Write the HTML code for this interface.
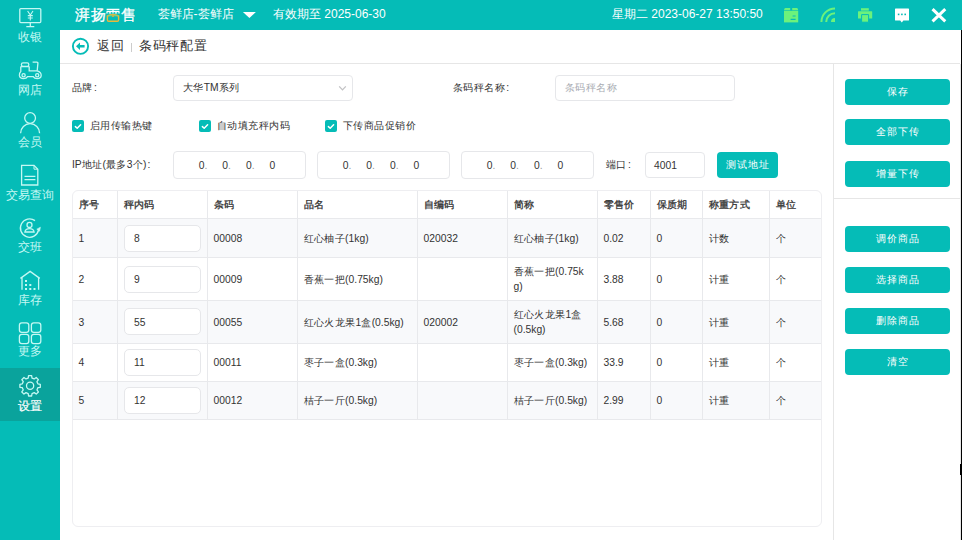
<!DOCTYPE html>
<html><head><meta charset="utf-8">
<style>
*{box-sizing:border-box;margin:0;padding:0}
html,body{width:962px;height:540px;overflow:hidden;background:#fff;font-family:"Liberation Sans",sans-serif;color:#333}
.a{position:absolute}
.sl{position:absolute;left:0;width:60px;text-align:center;color:#c4f8f3;font-size:12px;line-height:13px;white-space:nowrap}
.ht{position:absolute;color:#fff;font-size:12px;line-height:14px;white-space:nowrap}
.lbl{position:absolute;font-size:10.3px;line-height:12px;color:#333;white-space:nowrap}
.box{position:absolute;border:1px solid #e6e7ea;border-radius:4px;background:#fff}
.cb{position:absolute;width:12px;height:12px;background:#05bcb7;border-radius:2px}
.btn{position:absolute;background:#05bcb7;border-radius:4px;color:#fff;font-size:10.1px;letter-spacing:0.7px;padding-left:0.7px;text-align:center;white-space:nowrap}
.hl{position:absolute;background:#e8e9ec}
.cell{position:absolute;font-size:10.3px;line-height:15px;color:#333;white-space:nowrap}
.c{}
.th{-webkit-text-stroke:0.3px #333}
.th .c{-webkit-text-stroke:0.3px #333}
</style></head><body>
<div class="a" style="left:0;top:0;width:60px;height:540px;background:#05bcb7"></div>
<div class="a" style="left:0;top:368px;width:60px;height:53px;background:#0aa39c"></div>
<div class="a" style="left:60px;top:0;width:902px;height:30px;background:#05bcb7"></div>
<div class="sl" style="top:30.5px">收银</div>
<div class="sl" style="top:83.6px">网店</div>
<div class="sl" style="top:136px">会员</div>
<div class="sl" style="top:189px">交易查询</div>
<div class="sl" style="top:241px">交班</div>
<div class="sl" style="top:294px">库存</div>
<div class="sl" style="top:345px">更多</div>
<div class="sl" style="top:399.6px;color:#fff;-webkit-text-stroke:0.2px #fff">设置</div>
<svg class="a" style="left:0;top:0" width="60" height="421" viewBox="0 0 60 421" fill="none" stroke="#c4f8f3" stroke-width="1.3">
 <rect x="19.8" y="8.6" width="21" height="14" rx="1"/>
 <path d="M30.3 23 V26.6 M26.3 26.6 H34.3"/>
 <path d="M27.6 11 L30.3 15 L33 11 M27.8 15.6 H32.8 M27.8 18 H32.8 M30.3 15 V20.5" stroke-width="1.1"/>
 <rect x="21.4" y="62.8" width="7.4" height="3.6" rx="1.6"/>
 <path d="M20.8 66.6 H29.2"/>
 <path d="M32.6 62.2 H36.8 Q38 62.2 37.9 63.4 L37.2 70.8"/>
 <path d="M20.8 66.6 V71.4 Q19.2 72.8 19.4 75.4 Q19.8 78.6 23.6 78.6 Q26.4 78.6 27.6 76.6 H33.2 Q34.4 78.6 37.2 78.6 Q41 78.6 41.2 75.4 Q41.3 72 37.2 70.8 H29.2 V66.6"/>
 <circle cx="23.6" cy="75.2" r="1.6"/>
 <circle cx="37.2" cy="75.2" r="1.6"/>
 <circle cx="30.1" cy="118" r="5.4"/>
 <path d="M20.6 133.2 A9.5 9.5 0 0 1 39.6 133.2"/>
 <path d="M21.6 165.4 H34 L37.8 169.2 V185 H21.6 Z"/>
 <path d="M34 165.4 V169.2 H37.8" stroke-width="1"/>
 <path d="M24.5 176.4 H35.4 M24.5 179.7 H35.4"/>
 <path d="M35 220.6 A9.2 9.2 0 1 0 38.6 230"/>
 <path d="M36.8 229.2 L40.4 227.2 L39.6 231.2 Z" fill="#c4f8f3" stroke-width="0.6"/>
 <circle cx="29.5" cy="224.9" r="2.5"/>
 <path d="M24.9 232 Q25.4 228.6 29.5 228.6 Q33.6 228.6 34.1 232 Z"/>
 <path d="M20.4 278.4 L30.1 271.4 L39.8 278.4 M22 277.2 V289.8 M38.6 277.2 V289.8"/>
 <rect x="19.4" y="322.9" width="9.4" height="9.4" rx="2.4"/>
 <rect x="31.4" y="322.9" width="9.4" height="9.4" rx="2.4"/>
 <rect x="19.4" y="334.3" width="9.4" height="9.4" rx="2.4"/>
 <rect x="31.4" y="334.3" width="9.4" height="9.4" rx="2.4"/>
 <circle cx="30.1" cy="385.8" r="3.6"/>
 <path d="M37.86 383.87 L40.29 384.27 L40.29 387.33 L37.86 387.73 L36.95 389.93 L38.39 391.92 L36.22 394.09 L34.23 392.65 L32.03 393.56 L31.63 395.99 L28.57 395.99 L28.17 393.56 L25.97 392.65 L23.98 394.09 L21.81 391.92 L23.25 389.93 L22.34 387.73 L19.91 387.33 L19.91 384.27 L22.34 383.87 L23.25 381.67 L21.81 379.68 L23.98 377.51 L25.97 378.95 L28.17 378.04 L28.57 375.61 L31.63 375.61 L32.03 378.04 L34.23 378.95 L36.22 377.51 L38.39 379.68 L36.95 381.67 Z" stroke-linejoin="round"/>
</svg>
<svg class="a" style="left:0;top:0" width="60" height="421" viewBox="0 0 60 421" fill="#c4f8f3">
 <rect x="25" y="280" width="2" height="2"/>
 <rect x="25" y="284" width="2" height="2"/><rect x="29.3" y="284" width="2" height="2"/>
 <rect x="25" y="288" width="2" height="2"/><rect x="29.3" y="288" width="2" height="2"/><rect x="33.5" y="288" width="2" height="2"/>
</svg>
<div class="ht" style="left:75px;top:7px;font-size:14.6px;line-height:16px;letter-spacing:0.9px;-webkit-text-stroke:0.3px #fff">湃扬</div>
<div class="ht" style="left:121px;top:7px;font-size:14.6px;line-height:16px;-webkit-text-stroke:0.3px #fff">售</div>
<svg class="a" style="left:104px;top:6px" width="18" height="18" viewBox="104 6 18 18">
 <path d="M106.6 9.3 H119.4 M106.6 11.4 H119.4 M107 11.4 V13.6 M119 11.4 V13.6 M113 9.3 V13.6 M108.8 12.8 H111.2 M114.8 12.8 H117.2" stroke="#fff" stroke-width="1.3" fill="none"/>
 <path d="M107.4 16 Q113 13.6 118.6 16 V20 Q118.6 21.2 117.4 21.2 H108.6 Q107.4 21.2 107.4 20 Z" stroke="#e9b93a" stroke-width="1.4" fill="none"/>
 <path d="M107.6 15.8 H118.4" stroke="#7fd37c" stroke-width="0.9"/>
 <circle cx="113" cy="16.2" r="0.9" fill="#f0a830"/>
</svg>
<div class="ht" style="left:157.5px;top:7px;font-size:12.4px">荟鲜店-荟鲜店</div>
<div class="ht" style="left:273px;top:7px">有效期至 2025-06-30</div>
<div class="ht" style="left:612px;top:7px">星期二 2023-06-27 13:50:50</div>
<svg class="a" style="left:242px;top:11px" width="15" height="8" viewBox="0 0 15 8"><path d="M0.9 1.1 H13.9 L7.4 7 Z" fill="#fff"/></svg>
<svg class="a" style="left:780px;top:0" width="182" height="30" viewBox="780 0 182 30">
 <path d="M784 10.8 H798.2 V22.4 H784 Z" fill="#6cf27c"/>
 <path d="M785.4 8 H790.2 V10.3 H784 Q784.2 8 785.4 8 Z M792.2 8 H796.8 Q798 8 798.2 10.3 H792.2 Z" fill="#6cf27c"/>
 <path d="M792.6 16 H795.6 M790.6 19.4 H795.6" stroke="#05bcb7" stroke-width="1.2"/>
 <path d="M821.4 22 A13.6 13.6 0 0 1 835 8.4" fill="none" stroke="#6cf27c" stroke-width="2"/>
 <path d="M826.2 22 A8.8 8.8 0 0 1 835 13.2" fill="none" stroke="#6cf27c" stroke-width="2"/>
 <path d="M831 22 A4 4 0 0 1 835 18 V22 Z" fill="#6cf27c"/>
 <path d="M861 8.2 H868.8 V10.6 H861 Z" fill="#6cf27c"/>
 <path d="M858.4 11.2 H871.6 Q872.2 11.2 872.2 11.8 V18.4 H858 V11.8 Q858 11.2 858.4 11.2 Z" fill="#6cf27c"/>
 <path d="M861.6 14.6 H868.6 V22.2 H861.6 Z" fill="#6cf27c" stroke="#05bcb7" stroke-width="1"/>
 <path d="M895.6 8.4 H908.4 Q909 8.4 909 9 V20 Q909 20.6 908.4 20.6 H903.4 L901.8 22.6 L900.2 20.6 H895.6 Q895 20.6 895 20 V9 Q895 8.4 895.6 8.4 Z" fill="#fff"/>
 <rect x="897.8" y="13.6" width="1.6" height="1.6" fill="#05bcb7"/>
 <rect x="901.1" y="13.6" width="1.6" height="1.6" fill="#05bcb7"/>
 <rect x="904.4" y="13.6" width="1.6" height="1.6" fill="#05bcb7"/>
 <path d="M933.6 10.2 L944.2 20.4 M944.2 10.2 L933.6 20.4" stroke="#fff" stroke-width="3" stroke-linecap="square"/>
</svg>
<svg class="a" style="left:71px;top:37px" width="19" height="19" viewBox="0 0 19 19">
 <circle cx="9.5" cy="9.3" r="7.6" fill="none" stroke="#05bcb7" stroke-width="1.9"/>
 <path d="M5 9.3 L9 5.6 V8 H13.6 V10.6 H9 V13 Z" fill="#05bcb7"/>
</svg>
<div class="a" style="left:60px;top:63px;width:900px;height:1px;background:#e6e6e6"></div>
<div class="a" style="left:97px;top:38px;font-size:13px;line-height:16px;letter-spacing:0.8px;color:#333">返回</div>
<div class="a" style="left:131px;top:43px;width:1px;height:9px;background:#ccc"></div>
<div class="a" style="left:139px;top:38px;font-size:13px;line-height:16px;letter-spacing:0.7px;color:#333">条码秤配置</div>
<div class="a" style="left:833px;top:64px;width:1px;height:476px;background:#e6e6e6"></div>
<div class="a" style="left:834px;top:198px;width:126px;height:1px;background:#e6e6e6"></div>
<div class="a" style="left:960px;top:64px;width:1px;height:476px;background:#e6e6e6"></div>
<div class="a" style="left:961px;top:30px;width:1px;height:510px;background:#000"></div>
<div class="a" style="left:960px;top:464px;width:1px;height:11px;background:#000"></div>
<div class="lbl" style="left:72px;top:82.1px"><span class="c" style="letter-spacing:0.4px">品牌</span><span style="margin-left:1.2px">:</span></div>
<div class="box" style="left:173px;top:75px;width:180px;height:26px"></div>
<div class="lbl" style="left:183px;top:82.1px"><span class="c" style="letter-spacing:0.4px">大华</span>TM<span class="c" style="letter-spacing:0.4px">系列</span></div>
<svg class="a" style="left:338px;top:85px" width="10" height="7" viewBox="0 0 10 7"><path d="M1.2 1.4 L4.5 4.9 L7.8 1.4" fill="none" stroke="#c2c2c4" stroke-width="1.3"/></svg>
<div class="lbl" style="left:453px;top:82.1px"><span class="c" style="letter-spacing:0.4px">条码秤名称</span><span style="margin-left:1.2px">:</span></div>
<div class="box" style="left:555px;top:75px;width:180px;height:26px"></div>
<div class="lbl" style="left:565px;top:82.1px;color:#a8abb2"><span class="c" style="letter-spacing:0.4px">条码秤名称</span></div>
<div class="cb" style="left:72px;top:120px"></div><svg class="a" style="left:72px;top:120px" width="12" height="12" viewBox="0 0 12 12"><path d="M3.4 6.6 L5.2 8.2 L8.6 4.8" fill="none" stroke="#fff" stroke-width="1.5" stroke-linecap="round" stroke-linejoin="round"/></svg>
<div class="lbl" style="left:89.5px;top:119.6px;font-size:10.1px"><span class="c" style="letter-spacing:0.5px">启用传输热键</span></div>
<div class="cb" style="left:199px;top:120px"></div><svg class="a" style="left:199px;top:120px" width="12" height="12" viewBox="0 0 12 12"><path d="M3.4 6.6 L5.2 8.2 L8.6 4.8" fill="none" stroke="#fff" stroke-width="1.5" stroke-linecap="round" stroke-linejoin="round"/></svg>
<div class="lbl" style="left:216.5px;top:119.6px;font-size:10.1px"><span class="c" style="letter-spacing:0.5px">自动填充秤内码</span></div>
<div class="cb" style="left:325px;top:120px"></div><svg class="a" style="left:325px;top:120px" width="12" height="12" viewBox="0 0 12 12"><path d="M3.4 6.6 L5.2 8.2 L8.6 4.8" fill="none" stroke="#fff" stroke-width="1.5" stroke-linecap="round" stroke-linejoin="round"/></svg>
<div class="lbl" style="left:342.5px;top:119.6px;font-size:10.1px"><span class="c" style="letter-spacing:0.5px">下传商品促销价</span></div>
<div class="lbl" style="left:72px;top:159px">IP<span class="c" style="letter-spacing:0.4px">地址</span>(<span class="c" style="letter-spacing:0.4px">最多</span>3<span class="c" style="letter-spacing:0.4px">个</span>)<span style="margin-left:1.2px">:</span></div>
<div class="box" style="left:173px;top:151px;width:133px;height:28px"></div>
<div class="lbl" style="left:198.8px;top:160px">0<span style="color:#999">.</span></div>
<div class="lbl" style="left:222.2px;top:160px">0<span style="color:#999">.</span></div>
<div class="lbl" style="left:246.0px;top:160px">0<span style="color:#999">.</span></div>
<div class="lbl" style="left:269.6px;top:160px">0</div>
<div class="box" style="left:317px;top:151px;width:133px;height:28px"></div>
<div class="lbl" style="left:342.8px;top:160px">0<span style="color:#999">.</span></div>
<div class="lbl" style="left:366.2px;top:160px">0<span style="color:#999">.</span></div>
<div class="lbl" style="left:390.0px;top:160px">0<span style="color:#999">.</span></div>
<div class="lbl" style="left:413.6px;top:160px">0</div>
<div class="box" style="left:461px;top:151px;width:133px;height:28px"></div>
<div class="lbl" style="left:486.8px;top:160px">0<span style="color:#999">.</span></div>
<div class="lbl" style="left:510.2px;top:160px">0<span style="color:#999">.</span></div>
<div class="lbl" style="left:534.0px;top:160px">0<span style="color:#999">.</span></div>
<div class="lbl" style="left:557.6px;top:160px">0</div>
<div class="lbl" style="left:606px;top:159px"><span class="c" style="letter-spacing:0.4px">端口</span><span style="margin-left:1.2px">:</span></div>
<div class="box" style="left:645px;top:152px;width:60px;height:26px"></div>
<div class="lbl" style="left:654px;top:160px">4001</div>
<div class="btn" style="left:717px;top:152px;width:61px;height:26px;line-height:26px">测试地址</div>
<div class="a" style="left:72px;top:190px;width:750px;height:337px;border:1px solid #eeeef1;border-radius:6px"></div>
<div class="a" style="left:73px;top:219px;width:748px;height:38px;background:#f8f9fb"></div>
<div class="a" style="left:73px;top:301px;width:748px;height:42px;background:#f8f9fb"></div>
<div class="a" style="left:73px;top:382px;width:748px;height:37px;background:#f8f9fb"></div>
<div class="hl" style="left:73px;top:218px;width:748px;height:1px"></div>
<div class="hl" style="left:73px;top:257px;width:748px;height:1px"></div>
<div class="hl" style="left:73px;top:300px;width:748px;height:1px"></div>
<div class="hl" style="left:73px;top:343px;width:748px;height:1px"></div>
<div class="hl" style="left:73px;top:381px;width:748px;height:1px"></div>
<div class="hl" style="left:73px;top:419px;width:748px;height:1px"></div>
<div class="hl" style="left:117px;top:191px;width:1px;height:228px"></div>
<div class="hl" style="left:207px;top:191px;width:1px;height:228px"></div>
<div class="hl" style="left:297px;top:191px;width:1px;height:228px"></div>
<div class="hl" style="left:417px;top:191px;width:1px;height:228px"></div>
<div class="hl" style="left:507px;top:191px;width:1px;height:228px"></div>
<div class="hl" style="left:597px;top:191px;width:1px;height:228px"></div>
<div class="hl" style="left:650px;top:191px;width:1px;height:228px"></div>
<div class="hl" style="left:702px;top:191px;width:1px;height:228px"></div>
<div class="hl" style="left:769px;top:191px;width:1px;height:228px"></div>
<div class="cell th" style="left:78.5px;top:196.6px"><span class="c" style="letter-spacing:0.4px">序号</span></div>
<div class="cell th" style="left:123.5px;top:196.6px"><span class="c" style="letter-spacing:0.4px">秤内码</span></div>
<div class="cell th" style="left:213.5px;top:196.6px"><span class="c" style="letter-spacing:0.4px">条码</span></div>
<div class="cell th" style="left:303.5px;top:196.6px"><span class="c" style="letter-spacing:0.4px">品名</span></div>
<div class="cell th" style="left:423.5px;top:196.6px"><span class="c" style="letter-spacing:0.4px">自编码</span></div>
<div class="cell th" style="left:513.5px;top:196.6px"><span class="c" style="letter-spacing:0.4px">简称</span></div>
<div class="cell th" style="left:603.5px;top:196.6px"><span class="c" style="letter-spacing:0.4px">零售价</span></div>
<div class="cell th" style="left:656.5px;top:196.6px"><span class="c" style="letter-spacing:0.4px">保质期</span></div>
<div class="cell th" style="left:708.5px;top:196.6px"><span class="c" style="letter-spacing:0.4px">称重方式</span></div>
<div class="cell th" style="left:775.5px;top:196.6px"><span class="c" style="letter-spacing:0.4px">单位</span></div>
<div class="box" style="left:124px;top:225px;width:77px;height:27px;border-radius:5px"></div>
<div class="cell" style="left:78.5px;top:230.6px">1</div>
<div class="cell" style="left:134px;top:230.6px">8</div>
<div class="cell" style="left:213.5px;top:230.6px">00008</div>
<div class="cell" style="left:303.5px;top:230.6px"><span class="c" style="letter-spacing:0.4px">红心柚子</span>(1kg)</div>
<div class="cell" style="left:423.5px;top:230.6px">020032</div>
<div class="cell" style="left:513.5px;top:230.6px"><span class="c" style="letter-spacing:0.4px">红心柚子</span>(1kg)</div>
<div class="cell" style="left:603.5px;top:230.6px">0.02</div>
<div class="cell" style="left:656.5px;top:230.6px">0</div>
<div class="cell" style="left:708.5px;top:230.6px"><span class="c" style="letter-spacing:0.4px">计数</span></div>
<div class="cell" style="left:775.5px;top:230.6px"><span class="c" style="letter-spacing:0.4px">个</span></div>
<div class="box" style="left:124px;top:266px;width:77px;height:27px;border-radius:5px"></div>
<div class="cell" style="left:78.5px;top:271.6px">2</div>
<div class="cell" style="left:134px;top:271.6px">9</div>
<div class="cell" style="left:213.5px;top:271.6px">00009</div>
<div class="cell" style="left:303.5px;top:271.6px"><span class="c" style="letter-spacing:0.4px">香蕉一把</span>(0.75kg)</div>
<div class="cell" style="left:513.5px;top:264.1px"><span class="c" style="letter-spacing:0.4px">香蕉一把</span>(0.75k<br>g)</div>
<div class="cell" style="left:603.5px;top:271.6px">3.88</div>
<div class="cell" style="left:656.5px;top:271.6px">0</div>
<div class="cell" style="left:708.5px;top:271.6px"><span class="c" style="letter-spacing:0.4px">计重</span></div>
<div class="cell" style="left:775.5px;top:271.6px"><span class="c" style="letter-spacing:0.4px">个</span></div>
<div class="box" style="left:124px;top:308px;width:77px;height:27px;border-radius:5px"></div>
<div class="cell" style="left:78.5px;top:314.6px">3</div>
<div class="cell" style="left:134px;top:314.6px">55</div>
<div class="cell" style="left:213.5px;top:314.6px">00055</div>
<div class="cell" style="left:303.5px;top:314.6px"><span class="c" style="letter-spacing:0.4px">红心火龙果</span>1<span class="c" style="letter-spacing:0.4px">盒</span>(0.5kg)</div>
<div class="cell" style="left:423.5px;top:314.6px">020002</div>
<div class="cell" style="left:513.5px;top:307.1px"><span class="c" style="letter-spacing:0.4px">红心火龙果</span>1<span class="c" style="letter-spacing:0.4px">盒</span><br>(0.5kg)</div>
<div class="cell" style="left:603.5px;top:314.6px">5.68</div>
<div class="cell" style="left:656.5px;top:314.6px">0</div>
<div class="cell" style="left:708.5px;top:314.6px"><span class="c" style="letter-spacing:0.4px">计重</span></div>
<div class="cell" style="left:775.5px;top:314.6px"><span class="c" style="letter-spacing:0.4px">个</span></div>
<div class="box" style="left:124px;top:349px;width:77px;height:27px;border-radius:5px"></div>
<div class="cell" style="left:78.5px;top:355.1px">4</div>
<div class="cell" style="left:134px;top:355.1px">11</div>
<div class="cell" style="left:213.5px;top:355.1px">00011</div>
<div class="cell" style="left:303.5px;top:355.1px"><span class="c" style="letter-spacing:0.4px">枣子一盒</span>(0.3kg)</div>
<div class="cell" style="left:513.5px;top:355.1px"><span class="c" style="letter-spacing:0.4px">枣子一盒</span>(0.3kg)</div>
<div class="cell" style="left:603.5px;top:355.1px">33.9</div>
<div class="cell" style="left:656.5px;top:355.1px">0</div>
<div class="cell" style="left:708.5px;top:355.1px"><span class="c" style="letter-spacing:0.4px">计重</span></div>
<div class="cell" style="left:775.5px;top:355.1px"><span class="c" style="letter-spacing:0.4px">个</span></div>
<div class="box" style="left:124px;top:387px;width:77px;height:27px;border-radius:5px"></div>
<div class="cell" style="left:78.5px;top:393.1px">5</div>
<div class="cell" style="left:134px;top:393.1px">12</div>
<div class="cell" style="left:213.5px;top:393.1px">00012</div>
<div class="cell" style="left:303.5px;top:393.1px"><span class="c" style="letter-spacing:0.4px">桔子一斤</span>(0.5kg)</div>
<div class="cell" style="left:513.5px;top:393.1px"><span class="c" style="letter-spacing:0.4px">桔子一斤</span>(0.5kg)</div>
<div class="cell" style="left:603.5px;top:393.1px">2.99</div>
<div class="cell" style="left:656.5px;top:393.1px">0</div>
<div class="cell" style="left:708.5px;top:393.1px"><span class="c" style="letter-spacing:0.4px">计重</span></div>
<div class="cell" style="left:775.5px;top:393.1px"><span class="c" style="letter-spacing:0.4px">个</span></div>
<div class="btn" style="left:845px;top:79px;width:105px;height:25.5px;line-height:25.5px">保存</div>
<div class="btn" style="left:845px;top:119px;width:105px;height:25.5px;line-height:25.5px">全部下传</div>
<div class="btn" style="left:845px;top:161px;width:105px;height:25.5px;line-height:25.5px">增量下传</div>
<div class="btn" style="left:845px;top:226px;width:105px;height:25.5px;line-height:25.5px">调价商品</div>
<div class="btn" style="left:845px;top:267px;width:105px;height:25.5px;line-height:25.5px">选择商品</div>
<div class="btn" style="left:845px;top:308px;width:105px;height:25.5px;line-height:25.5px">删除商品</div>
<div class="btn" style="left:845px;top:349px;width:105px;height:25.5px;line-height:25.5px">清空</div>
</body></html>
